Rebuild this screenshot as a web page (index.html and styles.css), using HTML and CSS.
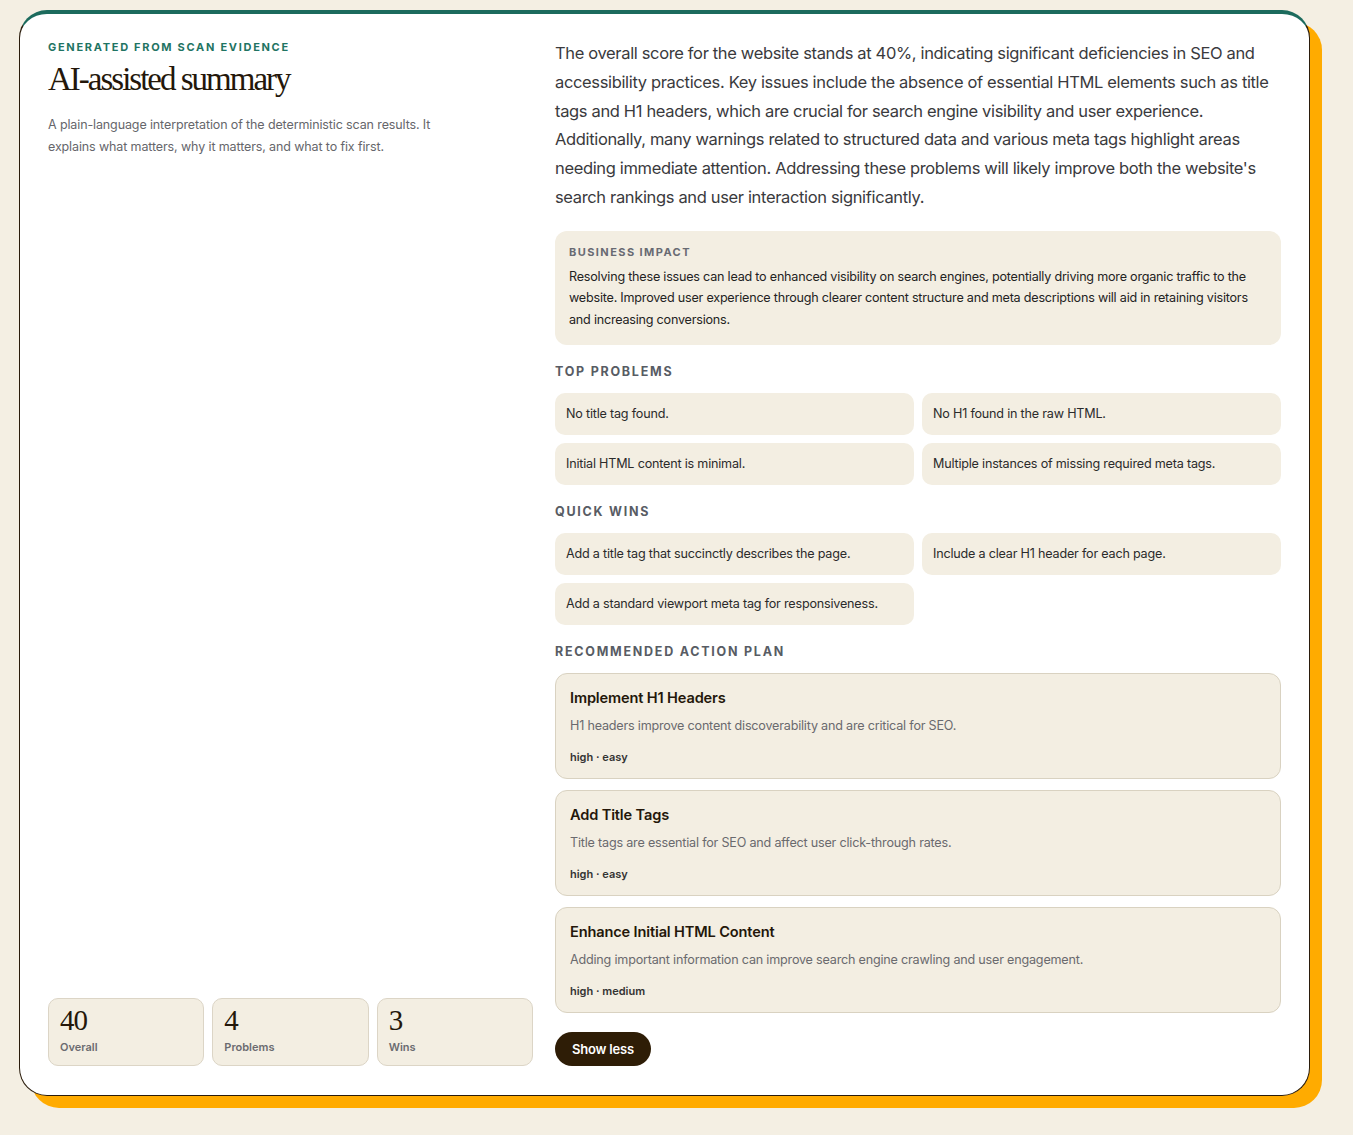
FILE: index.html
```html
<!DOCTYPE html>
<html lang="en">
<head>
<meta charset="utf-8">
<title>AI-assisted summary</title>
<link rel="stylesheet" href="styles.css">
</head>
<body>
<main class="page">
  <section class="card">
    <div class="left">
      <div class="intro">
        <div class="eyebrow">Generated from scan evidence</div>
        <h1 class="title">AI-assisted summary</h1>
        <p class="lede">A plain-language interpretation of the deterministic scan results. It explains what matters, why it matters, and what to fix first.</p>
      </div>
      <div class="stats">
        <div class="stat"><div class="stat-num">40</div><div class="stat-label">Overall</div></div>
        <div class="stat"><div class="stat-num">4</div><div class="stat-label">Problems</div></div>
        <div class="stat"><div class="stat-num">3</div><div class="stat-label">Wins</div></div>
      </div>
    </div>
    <div class="right">
      <p class="summary">The overall score for the website stands at 40%, indicating significant deficiencies in SEO and accessibility practices. Key issues include the absence of essential HTML elements such as title tags and H1 headers, which are crucial for search engine visibility and user experience. Additionally, many warnings related to structured data and various meta tags highlight areas needing immediate attention. Addressing these problems will likely improve both the website's search rankings and user interaction significantly.</p>
      <div class="impact">
        <div class="impact-label">Business impact</div>
        <p class="impact-text">Resolving these issues can lead to enhanced visibility on search engines, potentially driving more organic traffic to the website. Improved user experience through clearer content structure and meta descriptions will aid in retaining visitors and increasing conversions.</p>
      </div>
      <div class="section">
        <h2 class="section-title">Top problems</h2>
        <div class="chips">
          <div class="chip">No title tag found.</div>
          <div class="chip">No H1 found in the raw HTML.</div>
          <div class="chip">Initial HTML content is minimal.</div>
          <div class="chip">Multiple instances of missing required meta tags.</div>
        </div>
      </div>
      <div class="section">
        <h2 class="section-title">Quick wins</h2>
        <div class="chips">
          <div class="chip">Add a title tag that succinctly describes the page.</div>
          <div class="chip">Include a clear H1 header for each page.</div>
          <div class="chip">Add a standard viewport meta tag for responsiveness.</div>
        </div>
      </div>
      <div class="section">
        <h2 class="section-title">Recommended action plan</h2>
        <div class="actions">
          <div class="action">
            <div class="action-title">Implement H1 Headers</div>
            <div class="action-desc">H1 headers improve content discoverability and are critical for SEO.</div>
            <div class="action-meta">high · easy</div>
          </div>
          <div class="action">
            <div class="action-title">Add Title Tags</div>
            <div class="action-desc">Title tags are essential for SEO and affect user click-through rates.</div>
            <div class="action-meta">high · easy</div>
          </div>
          <div class="action">
            <div class="action-title">Enhance Initial HTML Content</div>
            <div class="action-desc">Adding important information can improve search engine crawling and user engagement.</div>
            <div class="action-meta">high · medium</div>
          </div>
        </div>
      </div>
      <div><button class="btn" type="button">Show less</button></div>
    </div>
  </section>
</main>
</body>
</html>
```

FILE: styles.css
```css
* { box-sizing: border-box; }
html, body { margin: 0; padding: 0; }
body {
  background: #f4efe3;
  font-family: Inter, "Noto Sans", "Liberation Sans", sans-serif;
  color: #2b2b2b;
}
.page {
  padding: 10px 43px 28px 19px;
}
.card {
  background: #ffffff;
  border: 1px solid #2a1c0c;
  border-top: 4px solid #1c6b5d;
  border-radius: 28px;
  box-shadow: 12px 12px 0 #ffab00;
  padding: 25px 28px 29px 28px;
  display: grid;
  grid-template-columns: 485fr 726fr;
  column-gap: 22px;
}
.left {
  display: flex;
  flex-direction: column;
  justify-content: space-between;
}
.eyebrow {
  font-size: 11px;
  line-height: 16px;
  font-weight: 700;
  letter-spacing: 0.155em;
  text-transform: uppercase;
  color: #1f7463;
}
.title {
  margin: 4px 0 0 0;
  font-family: "Liberation Serif", "DejaVu Serif", serif;
  font-weight: 400;
  font-size: 33px;
  line-height: 40px;
  letter-spacing: -2px;
  color: #24170a;
}
.lede {
  margin: 15px 0 0 0;
  max-width: 400px;
  font-size: 12.5px;
  line-height: 22px;
  letter-spacing: -0.12px;
  color: #66666b;
}
.stats {
  display: grid;
  grid-template-columns: repeat(3, 1fr);
  gap: 8px;
}
.stat {
  background: #f3eee2;
  border: 1px solid #dcd5c6;
  border-radius: 10px;
  padding: 5px 11px 10px;
  height: 68px;
}
.stat-num {
  font-family: "Liberation Serif", "DejaVu Serif", serif;
  font-size: 29px;
  line-height: 32px;
  letter-spacing: -1px;
  color: #24170a;
}
.stat-label {
  margin-top: 4px;
  font-size: 11px;
  font-weight: 600;
  color: #6b6b70;
}
.right {
  display: flex;
  flex-direction: column;
  gap: 19px;
}
.summary {
  margin: 0;
  font-size: 16.5px;
  line-height: 28.8px;
  letter-spacing: -0.35px;
  color: #3a3a3d;
}
.impact {
  background: #f3eee2;
  border-radius: 12px;
  padding: 14px 14px 15px;
}
.impact-label {
  font-size: 11px;
  line-height: 14px;
  font-weight: 700;
  letter-spacing: 0.13em;
  text-transform: uppercase;
  color: #686a72;
}
.impact-text {
  margin: 7px 0 0 0;
  font-size: 12.6px;
  line-height: 21.5px;
  letter-spacing: -0.22px;
  color: #232323;
}
.section-title {
  margin: 0 0 14px 0;
  font-size: 12.5px;
  line-height: 15px;
  font-weight: 700;
  letter-spacing: 0.14em;
  text-transform: uppercase;
  color: #585c64;
}
.chips {
  display: grid;
  grid-template-columns: 1fr 1fr;
  gap: 8px;
}
.chip {
  background: #f3eee2;
  border-radius: 10px;
  padding: 11px 11px;
  min-height: 42px;
  font-size: 12.6px;
  line-height: 20px;
  letter-spacing: -0.2px;
  color: #2b2b2b;
}
.actions {
  display: flex;
  flex-direction: column;
  gap: 11px;
}
.action {
  background: #f3eee2;
  border: 1px solid #d9d2c1;
  border-radius: 12px;
  padding: 14px 14px 14px;
  min-height: 106px;
}
.action-title {
  font-size: 14.6px;
  line-height: 20px;
  font-weight: 600;
  letter-spacing: -0.15px;
  color: #24170a;
}
.action-desc {
  margin-top: 8px;
  font-size: 12.6px;
  line-height: 20px;
  letter-spacing: -0.2px;
  color: #6a6a6e;
}
.action-meta {
  margin-top: 14px;
  font-size: 11px;
  line-height: 14px;
  font-weight: 600;
  color: #333;
}
.btn {
  border: 0;
  background: #2e1d06;
  color: #fff;
  font-family: Inter, "Noto Sans", "Liberation Sans", sans-serif;
  font-size: 13px;
  font-weight: 600;
  letter-spacing: -0.2px;
  height: 34px;
  padding: 0 17px;
  border-radius: 999px;
  cursor: pointer;
}
```
